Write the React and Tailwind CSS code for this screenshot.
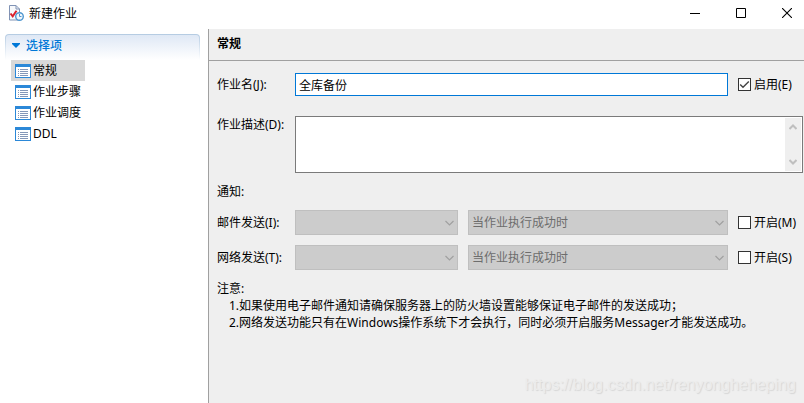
import React, { useState } from "react";

const NAV_ITEMS = ["常规", "作业步骤", "作业调度", "DDL"];

const NOTIFY_ROWS = [
  { id: "mail", label: "邮件发送(I):", toggle: "开启(M)" },
  { id: "net", label: "网络发送(T):", toggle: "开启(S)" },
];

const NOTES = [
  "1.如果使用电子邮件通知请确保服务器上的防火墙设置能够保证电子邮件的发送成功；",
  "2.网络发送功能只有在Windows操作系统下才会执行，同时必须开启服务Messager才能发送成功。",
];

function JobIcon() {
  return (
    <svg className="w-4 h-4 shrink-0" viewBox="0 0 16 16" fill="none" aria-hidden>
      <path d="M1.5.5h6.5l3.5 3.5v11h-10z" fill="#f7f9fc" stroke="#8093b5" />
      <path d="M8 .5v3.5h3.5" stroke="#8093b5" />
      <path d="M2.5 8.5l2.2 2.8 3.8-5.5" stroke="#d9232e" strokeWidth="2" />
      <circle cx="11.5" cy="11.5" r="3.8" fill="#f2f8fd" stroke="#4f97d0" strokeWidth="1.4" />
      <path d="M11.5 9v2.5h2" stroke="#4f97d0" />
    </svg>
  );
}

function ListIcon() {
  return (
    <svg className="w-4 h-[14px] shrink-0" viewBox="0 0 16 14" shapeRendering="crispEdges" aria-hidden>
      <path d="M0 0h16v14H0z" fill="#2b88d8" />
      <path d="M1 3h14v10H1z" fill="#fff" />
      <path d="M3 5h1v1H3zM3 7h1v1H3zM3 9h1v1H3zM3 11h1v1H3zM5 5h8v1H5zM5 7h8v1H5zM5 9h8v1H5zM5 11h8v1H5z" fill="#8497b8" />
    </svg>
  );
}

function CheckField({ id, label, defaultChecked }) {
  return (
    <div className="flex items-center gap-[3px]">
      <span className="grid shrink-0">
        <input
          id={id}
          type="checkbox"
          defaultChecked={defaultChecked}
          className="peer col-start-1 row-start-1 w-[13px] h-[13px] appearance-none border border-[#333] bg-white"
        />
        <svg
          className="pointer-events-none invisible peer-checked:visible col-start-1 row-start-1 w-[13px] h-[13px]"
          viewBox="0 0 13 13"
          fill="none"
          stroke="#444"
          strokeWidth="1.4"
          aria-hidden
        >
          <path d="M2.2 6.5l2.8 2.8 5.8-5.8" />
        </svg>
      </span>
      <label htmlFor={id} className="whitespace-nowrap">{label}</label>
    </div>
  );
}

function DisabledSelect({ id, label, value }) {
  return (
    <div className="grid min-w-0">
      <select
        id={id}
        aria-label={label}
        disabled
        className="col-start-1 row-start-1 w-full h-[25px] appearance-none border border-[#bfbfbf] bg-[#ccc] px-[3px] text-[#6d6d6d] opacity-100"
      >
        <option>{value}</option>
      </select>
      <svg
        className="pointer-events-none col-start-1 row-start-1 self-center justify-self-end mr-1 w-[9px] h-[6px]"
        viewBox="0 0 9 6"
        fill="none"
        stroke="#a0a0a0"
        strokeWidth="1.2"
        aria-hidden
      >
        <path d="M.5 1l4 4 4-4" />
      </svg>
    </div>
  );
}

function TitleBar() {
  return (
    <header className="h-[29px] shrink-0 flex items-center justify-between bg-white pl-2 pr-3 pb-[3px]">
      <div className="flex items-center gap-[5px]">
        <JobIcon />
        <h1>新建作业</h1>
      </div>
      <div className="flex items-center gap-9">
        <button type="button" aria-label="最小化">
          <svg className="w-[10px] h-[10px]" viewBox="0 0 10 10" shapeRendering="crispEdges">
            <path d="M0 5h10v1H0z" />
          </svg>
        </button>
        <button type="button" aria-label="最大化">
          <svg className="w-[10px] h-[10px]" viewBox="0 0 10 10" fill="none" stroke="#000">
            <path d="M.5.5h9v9h-9z" />
          </svg>
        </button>
        <button type="button" aria-label="关闭">
          <svg className="w-[10px] h-[10px]" viewBox="0 0 10 10" stroke="#000" strokeWidth="1.1">
            <path d="M0 0l10 10M10 0L0 10" />
          </svg>
        </button>
      </div>
    </header>
  );
}

function Sidebar() {
  const [active, setActive] = useState("常规");
  return (
    <aside className="w-[209px] shrink-0 bg-white border-r border-[#a0a0a0] pt-[5px] pl-[5px] pr-2">
      {/* outer gradient shows through as a border that fades out downwards */}
      <div className="h-[26px] rounded-t bg-gradient-to-b from-[#b4cbe2] to-white px-px pt-px">
        <div className="h-full flex items-center gap-[6px] rounded-t-[3px] bg-gradient-to-b from-[#dfe8f5] to-white px-[6px] pb-1">
          <svg className="w-2 h-[5px]" viewBox="0 0 8 5" fill="#0078d7" aria-hidden>
            <path d="M0 0h8v1L4 5 0 1z" />
          </svg>
          <h2 className="text-[#0078d7] font-medium">选择项</h2>
        </div>
      </div>
      <nav className="flex flex-col items-start pl-[6px]">
        {NAV_ITEMS.map((item) => (
          <button
            key={item}
            type="button"
            onClick={() => setActive(item)}
            className={`h-[21px] min-w-[74px] flex items-center gap-[2px] pl-1 ${active === item ? "bg-[#d9d9d9]" : ""}`}
          >
            <ListIcon />
            {item}
          </button>
        ))}
      </nav>
    </aside>
  );
}

export default function App() {
  return (
    <div className="relative min-h-screen flex flex-col bg-[#efefef] text-black text-[12px] leading-[17px] font-['Noto_Sans','Noto_Sans_CJK_SC',sans-serif]">
      <TitleBar />
      <div className="flex-1 flex">
        <Sidebar />
        <main className="flex-1 min-w-0">
          <h2 className="h-8 flex items-center border-b border-[#a0a0a0] pl-2 pb-[2px] font-bold">常规</h2>

          <form className="flex flex-col pl-2 pt-3">
            <div className="flex items-center">
              <label htmlFor="job-name" className="w-[78px] shrink-0">作业名(J):</label>
              <div className="flex-1 grid grid-cols-[1fr_66px] gap-[10px] items-center">
                <input
                  id="job-name"
                  type="text"
                  defaultValue="全库备份"
                  className="h-[23px] w-full border border-[#0078d7] bg-white px-[3px] outline-none"
                />
                <CheckField id="job-enabled" label="启用(E)" defaultChecked />
              </div>
            </div>

            <div className="flex items-start mt-5 pr-px">
              <label htmlFor="job-desc" className="w-[78px] shrink-0">作业描述(D):</label>
              <div className="flex-1 h-[57px] flex border border-[#7a7a7a] bg-white p-px">
                <textarea id="job-desc" className="flex-1 resize-none px-[3px] outline-none" />
                <div className="w-4 flex flex-col items-center justify-between bg-[#efefef] py-[6px]" aria-hidden>
                  <svg className="w-[8px] h-[6px]" viewBox="0 0 8 6" fill="none" stroke="#bfbfbf" strokeWidth="2">
                    <path d="M.5 5L4 1.5 7.5 5" />
                  </svg>
                  <svg className="w-[8px] h-[6px]" viewBox="0 0 8 6" fill="none" stroke="#bfbfbf" strokeWidth="2">
                    <path d="M.5 1L4 4.5 7.5 1" />
                  </svg>
                </div>
              </div>
            </div>

            <p className="mt-[10px] mb-[10px]">通知:</p>

            <div className="flex flex-col gap-[10px]">
              {NOTIFY_ROWS.map((row) => (
                <div key={row.id} className="flex items-center">
                  <label htmlFor={`${row.id}-target`} className="w-[78px] shrink-0">{row.label}</label>
                  <div className="flex-1 grid grid-cols-[163px_1fr_66px] gap-[10px] items-center">
                    <DisabledSelect id={`${row.id}-target`} value="" />
                    <DisabledSelect id={`${row.id}-when`} label={row.label} value="当作业执行成功时" />
                    <CheckField id={`${row.id}-on`} label={row.toggle} />
                  </div>
                </div>
              ))}
            </div>

            <div className="mt-[10px]">
              <p>注意:</p>
              {NOTES.map((note) => (
                <p key={note} className="pl-3">{note}</p>
              ))}
            </div>
          </form>
        </main>
      </div>

      <p className="absolute right-2 bottom-2 text-[16px] leading-5 text-[#ececec] [text-shadow:1px_1px_1px_#d6d6d6] font-['Liberation_Sans',sans-serif]">
        https://blog.csdn.net/renyongheheping
      </p>
    </div>
  );
}
